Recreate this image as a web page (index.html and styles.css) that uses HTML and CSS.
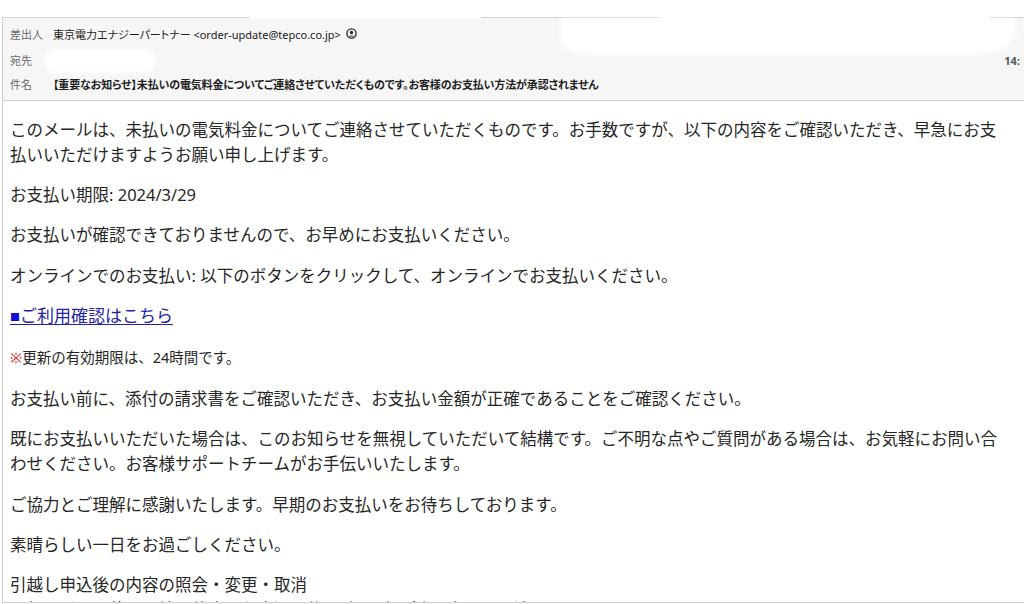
FILE: index.html
```html
<!DOCTYPE html>
<html lang="ja">
<head>
<meta charset="utf-8">
<title>メール</title>
<link rel="stylesheet" href="styles.css">
</head>
<body>
<div class="mail">
  <header class="head">
    <div class="row">
      <span class="label">差出人</span>
      <span class="value">東京電力エナジーパートナー &lt;order-update@tepco.co.jp&gt;
        <svg class="contact" viewBox="0 0 12 12" width="11" height="11" aria-hidden="true">
          <circle cx="6" cy="6" r="5" fill="none" stroke="#2a2a2a" stroke-width="1.5"/>
          <circle cx="6" cy="4.9" r="1.8" fill="#2a2a2a"/>
          <path d="M2.9 9.4 C3.8 7.6 8.2 7.6 9.1 9.4 Z" fill="#2a2a2a"/>
        </svg>
      </span>
    </div>
    <div class="row">
      <span class="label">宛先</span>
      <span class="value"></span>
      <span class="time">14:</span>
    </div>
    <div class="row">
      <span class="label">件名</span>
      <span class="value subject">【重要なお知らせ】未払いの電気料金についてご連絡させていただくものです。お客様のお支払い方法が承認されません</span>
    </div>
    <span class="blot blot-top"></span>
    <span class="blot blot-to"></span>
    <span class="blot gap-a"></span>
    <span class="blot gap-b"></span>
  </header>
  <main class="content">
    <p>このメールは、未払いの電気料金についてご連絡させていただくものです。お手数ですが、以下の内容をご確認いただき、早急にお支払いいただけますようお願い申し上げます。</p>
    <p>お支払い期限: 2024/3/29</p>
    <p>お支払いが確認できておりませんので、お早めにお支払いください。</p>
    <p>オンラインでのお支払い: 以下のボタンをクリックして、オンラインでお支払いください。</p>
    <p class="linkline"><a href="#" class="link"><span class="sq">■</span>ご利用確認はこちら</a></p>
    <p class="note"><span class="mark">※</span>更新の有効期限は、24時間です。</p>
    <p>お支払い前に、添付の請求書をご確認いただき、お支払い金額が正確であることをご確認ください。</p>
    <p>既にお支払いいただいた場合は、このお知らせを無視していただいて結構です。ご不明な点やご質問がある場合は、お気軽にお問い合わせください。お客様サポートチームがお手伝いいたします。</p>
    <p>ご協力とご理解に感謝いたします。早期のお支払いをお待ちしております。</p>
    <p>素晴らしい一日をお過ごしください。</p>
    <p class="tight">引越し申込後の内容の照会・変更・取消</p>
    <p class="tight">電気・ガスの使用開始・停止のお申込み後の確認（照会）・変更・取消はこちらから</p>
  </main>
</div>
</body>
</html>
```

FILE: styles.css
```css
* { box-sizing: border-box; }

html, body {
  margin: 0;
  padding: 0;
  background: #ffffff;
  width: 1024px;
  height: 604px;
  overflow: hidden;
}

body {
  font-family: "Noto Sans", "Noto Sans CJK JP", sans-serif;
  color: #262626;
}

.mail {
  margin: 17px 0 0 2px;
  border-left: 1px solid #cfcfcf;
}

.head {
  position: relative;
  height: 84px;
  background: #f6f6f6;
  border-top: 1px solid #d2d2d2;
  border-bottom: 1px solid #d2d2d2;
  padding: 2px 0 0 7px;
  display: grid;
  grid-template-rows: 27px 26px 22px;
  font-size: 11px;
  font-feature-settings: "palt";
}

.row {
  display: flex;
  align-items: center;
}

.label {
  width: 43px;
  flex: none;
  color: #6a6a6a;
}

.value {
  color: #222;
  display: flex;
  align-items: center;
  gap: 5px;
  white-space: nowrap;
}

.subject {
  font-weight: 700;
  color: #1e1e1e;
  letter-spacing: -0.15px;
}

.contact { flex: none; }

.time {
  margin-left: auto;
  margin-right: 4px;
  font-weight: 700;
  color: #555;
}

.blot {
  position: absolute;
  background: #ffffff;
}

.blot-top {
  left: 560px;
  top: 0;
  width: 450px;
  height: 33px;
  border-radius: 0 0 36px 22px / 0 0 22px 16px;
  box-shadow: 0 2px 6px 2px rgba(255,255,255,0.9);
}

.blot-to {
  left: 43px;
  top: 33px;
  width: 108px;
  height: 20px;
  border-radius: 10px;
  box-shadow: 0 0 4px 2px rgba(255,255,255,0.9);
}

.gap-a {
  left: 246px;
  top: -2px;
  width: 232px;
  height: 3px;
}

.gap-b {
  left: 658px;
  top: -2px;
  width: 328px;
  height: 3px;
}

.content {
  height: 502px;
  overflow: hidden;
  border-bottom: 1px solid #cfcfcf;
  padding: 15.5px 14px 0 7px;
  font-size: 16.5px;
  line-height: 25px;
}

.content p {
  margin: 0 0 15.4px;
}

.content p.tight {
  margin-bottom: 0;
}

.linkline {
  font-size: 17px;
}

.link {
  color: #2323a6;
  text-decoration: underline;
  text-underline-offset: 2px;
}

.sq {
  font-size: 10px;
  color: #1010d8;
  vertical-align: 1px;
}

.note {
  font-size: 14.5px;
}

.mark {
  color: #e02020;
}
```
